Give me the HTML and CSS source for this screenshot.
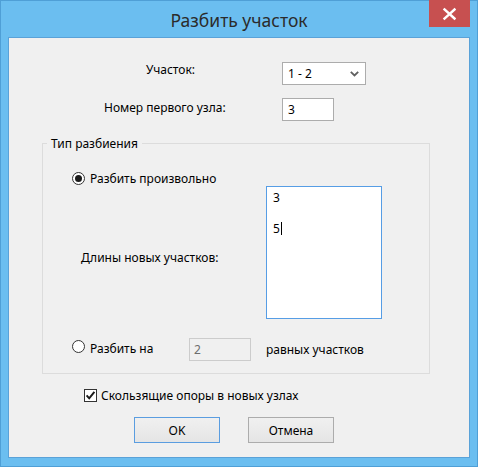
FILE: index.html
```html
<!DOCTYPE html>
<html lang="ru">
<head>
<meta charset="utf-8">
<title>Разбить участок</title>
<link rel="stylesheet" href="styles.css">
</head>
<body>
<div class="window">
  <div class="titlebar">
    <div class="spacer"></div>
    <div class="title">Разбить участок</div>
    <div class="close">
      <svg width="41" height="27" viewBox="0 0 41 27"><path d="M15.5 9.5 L25.5 18.5 M25.5 9.5 L15.5 18.5" stroke="#fff" stroke-width="2.4" stroke-linecap="square"/></svg>
    </div>
  </div>
  <div class="client">
    <div class="row row-seg">
      <span class="lbl lbl-seg">Участок:</span>
      <div class="combo">
        <span>1 - 2</span>
        <svg class="chev" width="9" height="6" viewBox="0 0 9 6"><path d="M0.8 0.8 L4.5 4.5 L8.2 0.8" stroke="#606060" stroke-width="1.8" fill="none"/></svg>
      </div>
    </div>
    <div class="row row-node">
      <span class="lbl lbl-node">Номер первого узла:</span>
      <div class="edit">3</div>
    </div>
    <fieldset class="group">
      <legend>Тип разбиения</legend>
      <div class="opt-free">
        <span class="radio checked"></span>
        <span class="opt-text">Разбить произвольно</span>
      </div>
      <div class="lengths">
        <span class="lbl-len">Длины новых участков:</span>
        <div class="memo">
          <div class="memo-line">3</div>
          <div class="memo-line">&nbsp;</div>
          <div class="memo-line">5<span class="caret"></span></div>
        </div>
      </div>
      <div class="opt-equal">
        <div class="opt-cell">
          <span class="radio"></span>
          <span class="opt-text">Разбить на</span>
        </div>
        <div class="edit disabled">2</div>
        <span class="eq-text">равных участков</span>
      </div>
    </fieldset>
    <div class="check-row">
      <span class="checkbox">
        <svg width="11" height="11" viewBox="0 0 11 11"><path d="M1.6 5.4 L4.2 8.3 L9.4 1.8" stroke="#1a1a1a" stroke-width="2" fill="none"/></svg>
      </span>
      <span class="check-text">Скользящие опоры в новых узлах</span>
    </div>
    <div class="buttons">
      <button class="btn btn-default">OK</button>
      <button class="btn">Отмена</button>
    </div>
  </div>
</div>
</body>
</html>
```
FILE: styles.css
```css
* { box-sizing: border-box; }
html, body { margin: 0; padding: 0; }
body {
  font-family: "Noto Sans", "Open Sans", sans-serif;
  font-size: 12px;
  line-height: 15px;
  color: #000;
  background: #6bbef0;
}
.window {
  width: 478px;
  height: 467px;
  border: 1px solid #4f9fd6;
  background: #6bbef0;
  display: flex;
  flex-direction: column;
  padding: 0 7px 8px 7px;
}
.titlebar {
  height: 36px;
  display: grid;
  grid-template-columns: 1fr auto 1fr;
  flex: none;
}
.title {
  font-size: 17.5px;
  line-height: 38px;
  color: #2b2b2b;
  white-space: nowrap;
}
.close {
  justify-self: end;
  align-self: start;
  width: 41px;
  height: 27px;
  margin-top: -1px;
  background: #c75050;
}
.close svg { display: block; }
.client {
  flex: 1;
  background: #f0f0f0;
  border: 1px solid #5aa2d8;
  display: flex;
  flex-direction: column;
  align-items: flex-start;
}
.row {
  display: grid;
  grid-template-columns: 273px auto;
  align-items: start;
}
.row-seg { margin-top: 24px; }
.row-node { margin-top: 13px; }
.lbl { white-space: nowrap; }
.lbl-seg { padding-left: 137px; }
.lbl-node { padding-left: 95px; margin-top: 2px; }
.combo {
  width: 84px;
  height: 23px;
  border: 1px solid #acacac;
  background: #fff;
  display: flex;
  align-items: center;
  padding-left: 5px;
}
.chev { margin-left: auto; margin-right: 6px; margin-top: 1px; }
.edit {
  width: 52px;
  height: 23px;
  border: 1px solid #acacac;
  background: #fff;
  padding: 3px 0 0 5px;
}
.edit.disabled {
  width: 62px;
  border-color: #cccccc;
  background: #f0f0f0;
  color: #6d6d6d;
  padding-left: 4px;
}
.group {
  margin: 15px 0 0 33px;
  width: 388px;
  min-width: 0;
  padding: 20px 0 12px 0;
  border: 1px solid #dcdcdc;
}
.group legend {
  margin-left: 4px;
  padding: 0 4px;
  line-height: 15px;
}
.opt-free {
  display: flex;
  align-items: center;
  height: 15px;
  padding-left: 29px;
}
.radio {
  width: 13px;
  height: 13px;
  border-radius: 50%;
  border: 1px solid #333;
  background: #fff;
  flex: none;
  display: flex;
  align-items: center;
  justify-content: center;
}
.radio.checked::after {
  content: "";
  width: 7px;
  height: 7px;
  border-radius: 50%;
  background: #1a1a1a;
}
.opt-text { margin-left: 5px; white-space: nowrap; }
.lengths {
  display: grid;
  grid-template-columns: 223px 116px;
  align-items: start;
}
.lbl-len { padding-left: 38px; margin-top: 64px; white-space: nowrap; }
.memo {
  height: 133px;
  border: 1px solid #569de5;
  background: #fff;
  padding: 3px 0 0 6px;
}
.memo-line { line-height: 15.5px; }
.caret {
  display: inline-block;
  width: 1px;
  height: 13px;
  background: #000;
  vertical-align: -2px;
  margin-left: 1px;
}
.opt-equal {
  display: grid;
  grid-template-columns: 146px 77px auto;
  align-items: start;
  margin-top: 19px;
  height: 23px;
}
.opt-cell {
  display: flex;
  align-items: flex-start;
  padding-left: 29px;
}
.opt-cell .radio { margin-top: 2px; }
.opt-cell .opt-text { margin-top: 3px; }
.eq-text { margin-top: 4px; white-space: nowrap; }
.check-row {
  display: flex;
  align-items: flex-start;
  margin: 14px 0 0 75px;
  height: 15px;
}
.checkbox {
  width: 13px;
  height: 13px;
  border: 1px solid #333;
  background: #fff;
  display: flex;
  align-items: center;
  justify-content: center;
  margin-top: 1px;
}
.checkbox svg { display: block; }
.check-text { margin-left: 4px; white-space: nowrap; }
.buttons {
  display: flex;
  gap: 28px;
  margin: 14px 0 0 125px;
}
.btn {
  width: 86px;
  height: 26px;
  border: 1px solid #acacac;
  background: linear-gradient(#f0f0f0, #e5e5e5);
  font-family: "Noto Sans", "Open Sans", sans-serif;
  font-size: 12px;
  color: #000;
  padding: 0;
}
.btn-default { border-color: #5a9de0; }
```
